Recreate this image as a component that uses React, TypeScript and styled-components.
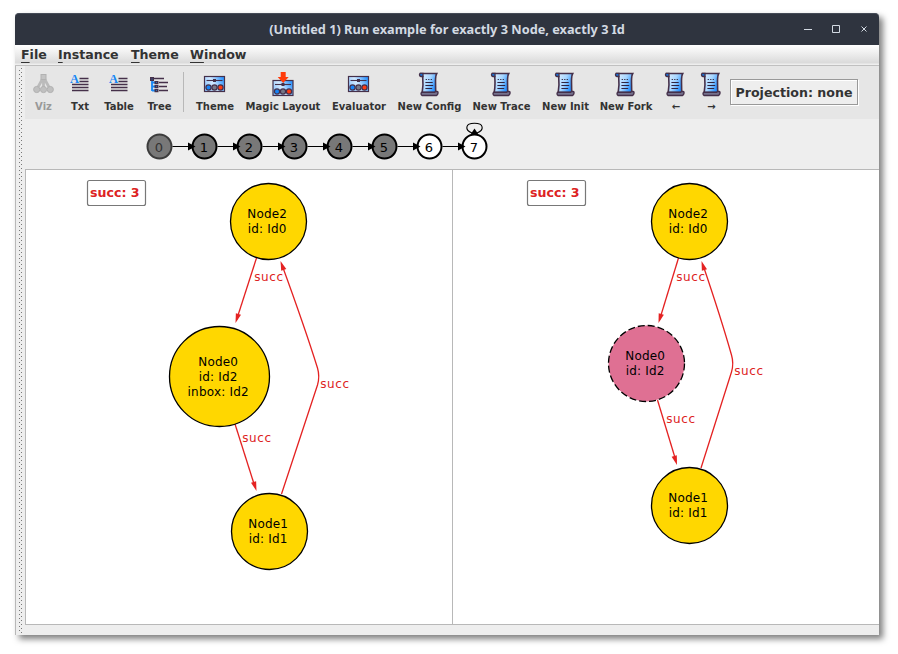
import React from 'react';
import styled, { createGlobalStyle } from 'styled-components';

const GlobalStyle = createGlobalStyle`
  html, body { margin: 0; padding: 0; background: #fff; overflow: hidden; }
  * { box-sizing: border-box; }
`;

const Desktop = styled.div`
  width: 898px;
  height: 654px;
  padding: 13px 19px 19px 15px;
  font-family: 'DejaVu Sans', sans-serif;
  color: #333;
`;

const Frame = styled.main`
  width: 864px;
  height: 622px;
  display: flex;
  flex-direction: column;
  background: #eee;
  border-radius: 4px 4px 0 0;
  box-shadow: 4px 4px 6px rgba(0, 0, 0, 0.5);
`;

const TitleBar = styled.header`
  height: 32px;
  flex: none;
  display: grid;
  grid-template-columns: 98px 1fr 98px;
  align-items: center;
  background: #2f343f;
  border-top: 1px solid #454b57;
  border-radius: 4px 4px 0 0;
`;

const Title = styled.h1`
  grid-column: 2;
  margin: 0;
  padding-bottom: 2px;
  text-align: center;
  font: bold 12.75px 'Noto Sans', sans-serif;
  color: #d3dae3;
  white-space: nowrap;
`;

const WindowControls = styled.svg`
  width: 98px;
  height: 31px;
  display: block;
`;

const MenuBar = styled.nav`
  height: 21px;
  flex: none;
  display: flex;
  padding: 1px 0 0 6px;
  background: linear-gradient(#fff, #dadada 18px, #eee 19px);
  border-bottom: 1px solid #c0c0c0;
`;

const MenuItem = styled.span<{ $width: number }>`
  width: ${p => p.$width}px;
  font-size: 12.6px;
  font-weight: bold;
  line-height: 18px;
  white-space: nowrap;
  &::first-letter { text-decoration: underline 1px; text-underline-offset: 3px; text-decoration-skip-ink: none; }
`;

const Body = styled.div`
  flex: 1;
  display: flex;
  min-height: 0;
  border-left: 1px solid #b8b8b8;
`;

const Grip = styled.div`
  width: 9px;
  flex: none;
  padding: 2px 2px 2px 3px;
`;

const GripDots = styled.div`
  width: 4px;
  height: 100%;
  background:
    radial-gradient(circle at 0.5px 0.5px, #777 0.7px, transparent 0.8px) 0 2px / 4px 4px,
    radial-gradient(circle at 0.5px 0.5px, #777 0.7px, transparent 0.8px) 2px 0 / 4px 4px;
`;

const Content = styled.div`
  flex: 1;
  min-width: 0;
  display: flex;
  flex-direction: column;
`;

const Toolbar = styled.div`
  height: 53px;
  flex: none;
  display: flex;
  background: #e6e6e6;
`;

const Tool = styled.div<{ $width: number; $disabled?: boolean }>`
  width: ${p => p.$width}px;
  display: flex;
  flex-direction: column;
  align-items: center;
  padding-top: 6px;
  color: ${p => (p.$disabled ? '#999' : '#333')};
`;

const ToolIcon = styled.svg`
  width: 24px;
  height: 25px;
  display: block;
`;

const ToolLabel = styled.span`
  font-size: 10px;
  font-weight: bold;
  line-height: 20px;
  white-space: nowrap;
`;

const Separator = styled.div`
  width: 1px;
  height: 40px;
  margin: 6px 4px 0;
  background: #b8b8b8;
`;

const Projection = styled.button`
  width: 128px;
  height: 26px;
  margin: 13px 0 0;
  padding: 0;
  border: 1px solid #999;
  background: #eee;
  box-shadow: 1px 1px 0 #fff, inset 1px 1px 0 #fff;
  font: bold 12.6px 'DejaVu Sans', sans-serif;
  color: #333;
  white-space: nowrap;
`;

const Timeline = styled.svg`
  width: 854px;
  height: 50px;
  flex: none;
  display: block;
`;

const Panes = styled.div`
  height: 456px;
  flex: none;
  display: grid;
  grid-template-columns: 426px 427px;
  border: 1px solid #b8b8b8;
  border-right: 0;
  background: #fff;
`;

const Pane = styled.svg<{ $divided?: boolean }>`
  width: ${p => (p.$divided ? 427 : 426)}px;
  height: 454px;
  display: block;
  border-left: ${p => (p.$divided ? '1px solid #b8b8b8' : '0')};
`;

const DARK = '#45304a';

function VizIcon() {
  return (
    <ToolIcon viewBox="0.500 0 24 25">
      <path d="M12 5v12M11 7L6 16M13 7l5 9" stroke="#bbb" strokeWidth="2.800" fill="none" />
      <rect x="9.5" y="2.500" width="5" height="5" fill="#c4c4c4" stroke="#b2b2b2" />
      {[5.2, 12, 18.8].map(x => (
        <circle key={x} cx={x} cy="17.500" r="3.100" fill="#c0c0c0" stroke="#b2b2b2" />
      ))}
    </ToolIcon>
  );
}

function TextIcon() {
  return (
    <ToolIcon viewBox="0 0 24 25">
      <text x="2" y="11" fontFamily="Liberation Serif, serif" fontWeight="bold" fontSize="12.500" fill="#1787f5">A</text>
      <path d="M11.500 6.500H20.500M11.500 9.500H20.500M4 12.500H20.500M4 15.500H20.500M4 18.500H20.500" stroke={DARK} strokeWidth="1.500" />
    </ToolIcon>
  );
}

function TreeIcon() {
  return (
    <ToolIcon viewBox="0 0 24 25">
      <path d="M4 8v11M4 10.500h4M4 14.500h4M4 18.500h4" stroke="#1787f5" strokeWidth="1.800" />
      <path d="M6 6.500H16M11 10.500H20M11 14.500H19M11 18.500H20" stroke={DARK} strokeWidth="1.300" />
      <path d="M2 5h4v4H2zM6.500 9h4v3.200h-4zM6.500 13h4v3.200h-4zM6.500 17h4v3.200h-4z" fill={DARK} />
      <path d="M3.500 6.500h1v1h-1zM8 10h1v1h-1zM8 14h1v1h-1zM8 18h1v1h-1z" fill="#2b6fb5" />
    </ToolIcon>
  );
}

function PanelIcon({ arrow }: { arrow?: boolean }) {
  return (
    <ToolIcon viewBox="0 0 24 25">
      <defs>
        <linearGradient id="panel" x1="0" y1="0.7" x2="1" y2="0.3">
          <stop offset="0" stopColor="#8cc4ff" />
          <stop offset="0.45" stopColor="#d3e9ff" />
          <stop offset="1" stopColor="#2f96ff" />
        </linearGradient>
      </defs>
      <g transform={arrow ? 'translate(0.500 4)' : undefined}>
        <rect x="1.500" y="4.500" width="20" height="15" fill="url(#panel)" stroke={DARK} strokeWidth="1.200" />
        <path d="M3.500 8.500H19.500" stroke={DARK} strokeWidth="1.100" />
        <rect x="10" y="7" width="3" height="3" fill={DARK} />
        <circle cx="5.500" cy="15.500" r="2.600" fill="#1683f7" stroke={DARK} strokeWidth="1.200" />
        <circle cx="11.500" cy="15.500" r="2.600" fill="#777787" stroke={DARK} strokeWidth="1.200" />
        <circle cx="17.500" cy="15.500" r="2.600" fill="#ff3b12" stroke={DARK} strokeWidth="1.200" />
      </g>
      {arrow && <path d="M9.700 0h5v5h3L12.200 11 6.700 5h3z" fill="#ff3b0a" />}
    </ToolIcon>
  );
}

function ScrollIcon() {
  return (
    <ToolIcon viewBox="1.800 0 24 25">
      <defs>
        <linearGradient id="paper" x1="0" y1="0" x2="1" y2="0.5">
          <stop offset="0" stopColor="#e0f0ff" />
          <stop offset="0.55" stopColor="#a8d6ff" />
          <stop offset="1" stopColor="#2a92ff" />
        </linearGradient>
      </defs>
      <path d="M5 1.500H20.500C19 4 19.500 6 19.300 9L19.500 20.500H6C7.200 14 7 10 6.500 4.500z" fill="url(#paper)" stroke={DARK} strokeWidth="1.600" />
      <path d="M3.800 1.300h3v3.200H4.800C3.300 4.200 2.800 2.500 3.800 1.300z" fill="#1773d8" stroke={DARK} strokeWidth="1.300" />
      <path d="M5.500 20.300H18.500l1-1 2 .3c.8 1.300 0 3.200-1.200 3.900H6c-1.400-.6-1.500-2.300-.5-3.200z" fill="#75718d" stroke={DARK} strokeWidth="1.400" />
      <path d="M9.500 7.500h1.200M12 7.500h1.200M14.500 7.500h1.200M9.200 10.500H16.500M9.200 13.500H17M9.200 16.500H16" stroke="#30243f" strokeWidth="1.200" />
    </ToolIcon>
  );
}

const tools = [
  { label: 'Viz', width: 37, icon: <VizIcon />, disabled: true },
  { label: 'Txt', width: 36, icon: <TextIcon /> },
  { label: 'Table', width: 42, icon: <TextIcon /> },
  { label: 'Tree', width: 39, icon: <TreeIcon /> },
];

const actions = [
  { label: 'Theme', width: 54, icon: <PanelIcon /> },
  { label: 'Magic Layout', width: 82, icon: <PanelIcon arrow /> },
  { label: 'Evaluator', width: 70, icon: <PanelIcon /> },
  { label: 'New Config', width: 71, icon: <ScrollIcon /> },
  { label: 'New Trace', width: 73, icon: <ScrollIcon /> },
  { label: 'New Init', width: 55, icon: <ScrollIcon /> },
  { label: 'New Fork', width: 66, icon: <ScrollIcon /> },
  { label: '←', width: 34, icon: <ScrollIcon /> },
  { label: '→', width: 37, icon: <ScrollIcon /> },
];

function StateTimeline() {
  return (
    <Timeline viewBox="25 119 854 50">
      {Array.from({ length: 8 }, (_, i) => {
        const x = 159.5 + i * 45;
        return (
          <g key={i}>
            <circle cx={x} cy="146.500" r="12" fill={i < 6 ? '#787878' : '#fff'} stroke={i ? '#000' : '#3c3c3c'} strokeWidth="2" />
            <text x={x - 0.7} y="152" textAnchor="middle" fontSize="13" fill={i ? '#000' : '#333'}>{i}</text>
          </g>
        );
      })}
      {Array.from({ length: 7 }, (_, i) => {
        const x = 159.5 + i * 45;
        return (
          <g key={i}>
            <path d={`M${x + 13} 146.500H${x + 31}`} stroke="#000" />
            <path d={`M${x + 28.5} 142.500l7.500 4-7.500 4z`} />
          </g>
        );
      })}
      <path d="M472 133C464.500 130 465 123.300 474.500 123.300S484.500 130 477 133" fill="none" stroke="#000" strokeWidth="1.100" />
      <path d="M474.500 128.500l4 6h-8z" />
    </Timeline>
  );
}

interface GraphNode { x: number; y: number; r: number; lines: string[]; dashed?: boolean }
interface GraphEdge { path: string; tip: [number, number, number]; label: [number, number] }

const leftNodes: GraphNode[] = [
  { x: 268.5, y: 221.5, r: 38, lines: ['Node2', 'id: Id0'] },
  { x: 219.5, y: 376.5, r: 50, lines: ['Node0', 'id: Id2', 'inbox: Id2'] },
  { x: 269.5, y: 531.5, r: 38, lines: ['Node1', 'id: Id1'] },
];
const leftEdges: GraphEdge[] = [
  { path: 'M256.500 258L236.500 320', tip: [235.5, 323, 108], label: [254.3, 281] },
  { path: 'M235 424L255 487', tip: [256.5, 491, 72], label: [242.3, 442] },
  { path: 'M281.500 494L317.500 385Q320 376.500 317.500 368Q305 328 282 265', tip: [280.5, 261, 250], label: [320.3, 388] },
];
const rightNodes: GraphNode[] = [
  { x: 689.5, y: 221.5, r: 38, lines: ['Node2', 'id: Id0'] },
  { x: 646.5, y: 363.5, r: 38, lines: ['Node0', 'id: Id2'], dashed: true },
  { x: 689.5, y: 505.5, r: 38, lines: ['Node1', 'id: Id1'] },
];
const rightEdges: GraphEdge[] = [
  { path: 'M678.500 258L659.500 320', tip: [658.5, 323, 107], label: [676.3, 281] },
  { path: 'M657.500 400L676 461', tip: [677, 465, 73], label: [666.3, 423] },
  { path: 'M701 468L731.500 372Q734 363.500 731.500 355Q721 318 703 265', tip: [701.5, 261, 252], label: [734.3, 375] },
];

function Graph({ nodes, edges, originX, legendX, divided }: {
  nodes: GraphNode[]; edges: GraphEdge[]; originX: number; legendX: number; divided?: boolean;
}) {
  return (
    <Pane $divided={divided} viewBox={`${originX} 170 426 454`}>
      <rect x={legendX + 0.5} y="180.500" width="58" height="25" rx="2" fill="#fff" stroke="#787878" strokeWidth="1.200" />
      <text x={legendX + 3} y="197" fontSize="12.600" fontWeight="bold" fill="#dd2222">succ: 3</text>
      {edges.map((e, i) => (
        <g key={i}>
          <path d={e.path} fill="none" stroke="#e42222" strokeWidth="1.300" />
          <path d="M0 0L-9.500 2.700V-2.700z" fill="#e42222" transform={`translate(${e.tip[0]} ${e.tip[1]}) rotate(${e.tip[2]})`} />
          <text x={e.label[0]} y={e.label[1]} fontSize="12" fill="#dd2222" letterSpacing="0.550">succ</text>
        </g>
      ))}
      {nodes.map(n => (
        <g key={n.lines[0]}>
          <circle cx={n.x} cy={n.y} r={n.r} fill={n.dashed ? '#df7093' : '#ffd700'} stroke="#000" strokeWidth="1.300" strokeDasharray={n.dashed ? '7 3' : undefined} />
          {n.lines.map((t, i) => (
            <text key={t} x={n.x - 1.3} y={n.y + 4 + (i - (n.lines.length - 1) / 2) * 15} textAnchor="middle" fontSize="12" letterSpacing="0.200" fill="#000">{t}</text>
          ))}
        </g>
      ))}
    </Pane>
  );
}

export default function App() {
  return (
    <Desktop>
      <GlobalStyle />
      <Frame>
        <TitleBar>
          <Title>(Untitled 1) Run example for exactly 3 Node, exactly 3 Id</Title>
          <WindowControls viewBox="0 0 98 31">
            <path d="M23 15.500h8M51.500 11.500h7v7h-7zM80.500 12.500l5 5M85.500 12.500l-5 5" fill="none" stroke="#d3dae3" />
          </WindowControls>
        </TitleBar>
        <MenuBar>
          <MenuItem $width={37}>File</MenuItem>
          <MenuItem $width={73}>Instance</MenuItem>
          <MenuItem $width={59}>Theme</MenuItem>
          <MenuItem $width={60}>Window</MenuItem>
        </MenuBar>
        <Body>
          <Grip><GripDots /></Grip>
          <Content>
            <Toolbar>
              {tools.map(t => (
                <Tool key={t.label} $width={t.width} $disabled={t.disabled}>{t.icon}<ToolLabel>{t.label}</ToolLabel></Tool>
              ))}
              <Separator />
              {actions.map(t => (
                <Tool key={t.label} $width={t.width}>{t.icon}<ToolLabel>{t.label}</ToolLabel></Tool>
              ))}
              <Projection>Projection: none</Projection>
            </Toolbar>
            <StateTimeline />
            <Panes>
              <Graph nodes={leftNodes} edges={leftEdges} originX={26} legendX={87} />
              <Graph nodes={rightNodes} edges={rightEdges} originX={453} legendX={527} divided />
            </Panes>
          </Content>
        </Body>
      </Frame>
    </Desktop>
  );
}
